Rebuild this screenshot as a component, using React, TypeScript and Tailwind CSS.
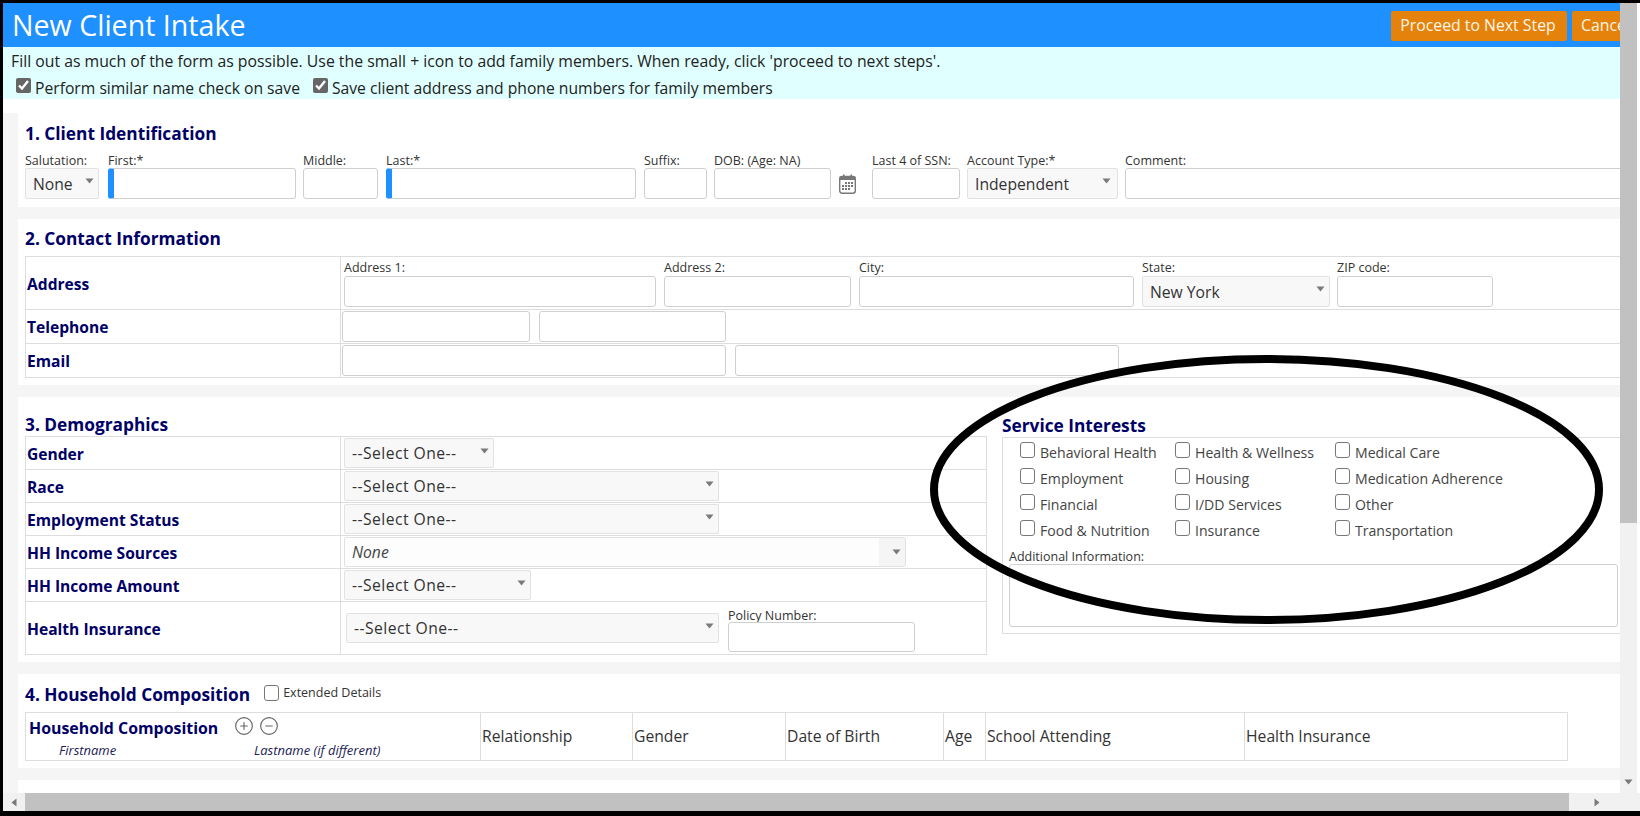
import React from "react";
import { CirclePlus, CircleMinus } from "lucide-react";

const inputCls = "block h-full w-full rounded-[3px] border border-[#cfcfcf] bg-white outline-none";

function Arrow({ className = "" }: { className?: string }) {
  return (
    <svg width="9" height="6" viewBox="0 0 9 6" className={className}>
      <path d="M0.5 0.5 H8.5 L4.5 5.5 Z" fill="#7a7a7a" />
    </svg>
  );
}

function Sel({ text, className = "" }: { text: string; className?: string }) {
  return (
    <div className={"flex items-center justify-between rounded-[2px] border border-[#e2e2e2] bg-[#f8f8f8] pl-[7px] pr-[4px] text-[15.7px] text-[#333] " + className}>
      <span className="whitespace-nowrap pt-[2px]">{text}</span>
      <Arrow className="mb-[5px] shrink-0" />
    </div>
  );
}

function Field({ label, className = "", children }: { label: string; className?: string; children: React.ReactNode }) {
  return (
    <div className={"flex shrink-0 flex-col " + className}>
      <div className="h-[15px] whitespace-nowrap text-[12.5px] leading-[16px] text-[#333]">{label}</div>
      <div className="h-[31px]">{children}</div>
    </div>
  );
}

function AddrField({ label, className = "", children }: { label: string; className?: string; children: React.ReactNode }) {
  return (
    <div className={"flex shrink-0 flex-col " + className}>
      <div className="h-[19px] whitespace-nowrap text-[12.5px] leading-[21px] text-[#333]">{label}</div>
      <div className="h-[31px]">{children}</div>
    </div>
  );
}

function Heading({ children, className = "" }: { children: React.ReactNode; className?: string }) {
  return <div className={"flex items-center whitespace-nowrap text-[17.3px] font-bold text-[#000066] " + className}>{children}</div>;
}

function Box({ className = "" }: { className?: string }) {
  return <input type="checkbox" className={"h-[16px] w-[15px] shrink-0 appearance-none rounded-[3px] border border-[#777] bg-white " + className} />;
}

function Row({ label, className = "", cellClass = "", children }: { label: string; className?: string; cellClass?: string; children?: React.ReactNode }) {
  return (
    <div className={"flex border-b border-[#dddddd] " + className}>
      <div className="flex w-[315px] shrink-0 items-center border-r border-[#dddddd] pl-[1px] pt-[3px] text-[15.6px] font-bold text-[#000066]">{label}</div>
      <div className={"flex min-w-0 flex-1 " + cellClass}>{children}</div>
    </div>
  );
}

const interests = [
  ["Behavioral Health", "Health & Wellness", "Medical Care"],
  ["Employment", "Housing", "Medication Adherence"],
  ["Financial", "I/DD Services", "Other"],
  ["Food & Nutrition", "Insurance", "Transportation"],
];

const hhCols = [
  { t: "Relationship", w: "w-[152px]" },
  { t: "Gender", w: "w-[153px]" },
  { t: "Date of Birth", w: "w-[158px]" },
  { t: "Age", w: "w-[42px]" },
  { t: "School Attending", w: "w-[259px]" },
  { t: "Health Insurance", w: "flex-1" },
];

const selectOne = "tracking-[0.45px]";

export default function App() {
  return (
    <div className="relative flex h-[816px] w-[1640px] flex-col overflow-hidden border-l-[3px] border-t-[3px] border-b-[5px] border-black bg-white font-['Open_Sans',sans-serif] text-[#222]">
      <div className="flex min-h-0 flex-1">
        <main className="flex w-[1617px] shrink-0 flex-col overflow-hidden">
          <header className="flex h-[44px] shrink-0 items-center bg-[#1e90ff] pl-[9px] pt-[1px]">
            <div className="min-w-0 flex-1 whitespace-nowrap text-[28.6px] leading-none text-white">New Client Intake</div>
            <div className="mr-[-64px] flex shrink-0 gap-[5px]">
              <button className="h-[30px] w-[176px] rounded-[2px] bg-[#e5820b] pr-[2px] text-[15.8px] text-[#fff6e8]">Proceed to Next Step</button>
              <button className="h-[30px] w-[112px] rounded-[2px] bg-[#e5820b] pl-[9px] text-left text-[15.8px] text-[#fff6e8]">Cancel</button>
            </div>
          </header>

          <div className="h-[52px] shrink-0 bg-[#e0ffff] pl-[8px]">
            <div className="flex h-[27px] items-end whitespace-nowrap text-[15.8px]">Fill out as much of the form as possible. Use the small + icon to add family members. When ready, click 'proceed to next steps'.</div>
            <div className="flex h-[25px] items-center whitespace-nowrap pl-[5px] text-[15.7px]">
              <input type="checkbox" defaultChecked className="m-0 mb-[2px] h-[15px] w-[15px] accent-[#666]" />
              <span className="ml-[4px] pt-[4px]">Perform similar name check on save</span>
              <input type="checkbox" defaultChecked className="m-0 mb-[2px] ml-[13px] h-[15px] w-[15px] accent-[#666]" />
              <span className="ml-[4px] pt-[4px]">Save client address and phone numbers for family members</span>
            </div>
          </div>

          <div className="mt-[14px] flex min-h-0 flex-1 flex-col gap-[12px] overflow-hidden bg-[#f5f5f5] pl-[15px]">
            {/* 1 */}
            <section className="h-[94px] shrink-0 bg-white pl-[7px]">
              <Heading className="h-[40px] pt-[2px]">1. Client Identification</Heading>
              <div className="flex">
                <Field label="Salutation:" className="w-[74px]"><Sel text="None" className="h-full" /></Field>
                <Field label="First:*" className="ml-[9px] w-[188px]"><input className={inputCls + " border-l-[6px] border-l-[#1e90ff]"} /></Field>
                <Field label="Middle:" className="ml-[7px] w-[75px]"><input className={inputCls} /></Field>
                <Field label="Last:*" className="ml-[8px] w-[250px]"><input className={inputCls + " border-l-[6px] border-l-[#1e90ff]"} /></Field>
                <Field label="Suffix:" className="ml-[8px] w-[63px]"><input className={inputCls} /></Field>
                <Field label="DOB: (Age: NA)" className="ml-[7px] w-[117px]"><input className={inputCls} /></Field>
                <div className="ml-[8px] flex w-[18px] shrink-0 items-end pb-[5px]">
                  <svg width="17" height="20" viewBox="0 0 17 20">
                    <rect x="0.7" y="2.5" width="15.6" height="16.8" rx="2.5" fill="none" stroke="#777" strokeWidth="1.4" />
                    <rect x="0.7" y="2.5" width="15.6" height="3.5" fill="#777" />
                    <rect x="4" y="0.5" width="1.6" height="3.5" fill="#777" />
                    <rect x="11.4" y="0.5" width="1.6" height="3.5" fill="#777" />
                    <g fill="#777">
                      <rect x="6" y="8" width="2" height="2" /><rect x="9" y="8" width="2" height="2" /><rect x="12" y="8" width="2" height="2" />
                      <rect x="3" y="11" width="2" height="2" /><rect x="6" y="11" width="2" height="2" /><rect x="9" y="11" width="2" height="2" /><rect x="12" y="11" width="2" height="2" />
                      <rect x="3" y="14" width="2" height="2" /><rect x="6" y="14" width="2" height="2" /><rect x="9" y="14" width="2" height="2" />
                    </g>
                  </svg>
                </div>
                <Field label="Last 4 of SSN:" className="ml-[15px] w-[88px]"><input className={inputCls} /></Field>
                <Field label="Account Type:*" className="ml-[7px] w-[151px]"><Sel text="Independent" className="h-full pr-[6px]" /></Field>
                <Field label="Comment:" className="ml-[7px] w-[500px]"><input className={inputCls} /></Field>
              </div>
            </section>

            {/* 2 */}
            <section className="h-[166px] shrink-0 bg-white pl-[7px]">
              <Heading className="h-[37px] pt-[3px]">2. Contact Information</Heading>
              <div className="border-t border-l border-[#dddddd]">
                <Row label="Address" className="h-[53px]" cellClass="pl-[3px]">
                  <AddrField label="Address 1:" className="w-[312px]"><input className={inputCls} /></AddrField>
                  <AddrField label="Address 2:" className="ml-[8px] w-[187px]"><input className={inputCls} /></AddrField>
                  <AddrField label="City:" className="ml-[8px] w-[275px]"><input className={inputCls} /></AddrField>
                  <AddrField label="State:" className="ml-[8px] w-[188px]"><Sel text="New York" className="h-full" /></AddrField>
                  <AddrField label="ZIP code:" className="ml-[7px] w-[156px]"><input className={inputCls} /></AddrField>
                </Row>
                <Row label="Telephone" className="h-[34px]" cellClass="items-center pl-[1px]">
                  <input className={inputCls + " !h-[31px] !w-[188px]"} />
                  <input className={inputCls + " ml-[9px] !h-[31px] !w-[187px]"} />
                </Row>
                <Row label="Email" className="h-[34px]" cellClass="items-center pl-[1px]">
                  <input className={inputCls + " !h-[31px] !w-[384px]"} />
                  <input className={inputCls + " ml-[9px] !h-[31px] !w-[384px]"} />
                </Row>
              </div>
            </section>

            {/* 3 */}
            <section className="flex h-[265px] shrink-0 bg-white pl-[7px]">
              <div className="w-[962px] shrink-0">
                <Heading className="h-[39px] pt-[17px]">3. Demographics</Heading>
                <div className="border-t border-l border-r border-[#dddddd]">
                  <Row label="Gender" className="h-[33px]" cellClass="items-center pl-[3px]"><Sel text="--Select One--" className={"h-[30px] w-[150px] " + selectOne} /></Row>
                  <Row label="Race" className="h-[33px]" cellClass="items-center pl-[3px]"><Sel text="--Select One--" className={"h-[30px] w-[375px] " + selectOne} /></Row>
                  <Row label="Employment Status" className="h-[33px]" cellClass="items-center pl-[3px]"><Sel text="--Select One--" className={"h-[30px] w-[375px] " + selectOne} /></Row>
                  <Row label="HH Income Sources" className="h-[33px]" cellClass="items-center pl-[3px]">
                    <div className="flex h-[30px] w-[562px] items-center justify-between rounded-[2px] border border-[#e2e2e2] bg-[#fdfdfd] text-[15.7px] italic text-[#444]">
                      <span className="pl-[7px] pt-[2px]">None</span>
                      <span className="flex h-full w-[26px] items-center justify-center bg-[#f5f5f5] pl-[8px]"><Arrow /></span>
                    </div>
                  </Row>
                  <Row label="HH Income Amount" className="h-[33px]" cellClass="items-center pl-[3px]"><Sel text="--Select One--" className={"h-[30px] w-[187px] " + selectOne} /></Row>
                  <Row label="Health Insurance" className="h-[53px]" cellClass="items-start pl-[5px]">
                    <Sel text="--Select One--" className={"mt-[11px] h-[30px] w-[373px] " + selectOne} />
                    <div className="ml-[9px] flex w-[187px] flex-col pt-[5px]">
                      <div className="h-[15px] whitespace-nowrap text-[12.5px] leading-[17px] text-[#333]">Policy Number:</div>
                      <input className={inputCls + " !h-[30px]"} />
                    </div>
                  </Row>
                </div>
              </div>
              <div className="ml-[15px] min-w-0 flex-1">
                <Heading className="h-[40px] pt-[17px]">Service Interests</Heading>
                <div className="h-[197px] border-t border-b border-l border-[#dddddd] pt-[4px]">
                  <div className="grid grid-cols-[155px_160px_1fr] pl-[17px]">
                    {interests.flat().map((t) => (
                      <label key={t} className="flex h-[26px] items-start gap-[5px] whitespace-nowrap text-[14.1px] leading-[22px] text-[#444]">
                        <Box />
                        <span>{t}</span>
                      </label>
                    ))}
                  </div>
                  <div className="pl-[6px] pr-[2px]">
                    <div className="h-[18px] whitespace-nowrap text-[12.5px] leading-[21px] text-[#333]">Additional Information:</div>
                    <textarea className="block h-[63px] w-full resize-none rounded-[3px] border border-[#cfcfcf] bg-white outline-none" />
                  </div>
                </div>
              </div>
            </section>

            {/* 4 */}
            <section className="h-[94px] shrink-0 bg-white pl-[7px]">
              <div className="flex h-[38px] items-center pt-[4px]">
                <Heading>4. Household Composition</Heading>
                <Box className="ml-[14px] mb-[4px]" />
                <span className="mb-[3px] ml-[4px] whitespace-nowrap text-[12.5px] text-[#333]">Extended Details</span>
              </div>
              <div className="flex h-[49px] w-[1543px] border border-[#dddddd]">
                <div className="w-[455px] shrink-0 border-r border-[#dddddd]">
                  <div className="flex h-[28px] items-center pl-[3px]">
                    <span className="whitespace-nowrap pt-[4px] text-[15.9px] font-bold text-[#000066]">Household Composition</span>
                    <CirclePlus size={20} strokeWidth={1.4} color="#666" className="mb-[2px] ml-[16px]" />
                    <CircleMinus size={20} strokeWidth={1.4} color="#666" className="mb-[2px] ml-[5px]" />
                  </div>
                  <div className="flex h-[19px] items-center text-[13px] italic text-[#222255]">
                    <span className="ml-[33px] w-[195px]">Firstname</span>
                    <span>Lastname (if different)</span>
                  </div>
                </div>
                {hhCols.map((c, i) => (
                  <div key={c.t} className={"flex shrink-0 items-center whitespace-nowrap pl-[1px] pt-[1px] text-[15.7px] text-[#333] " + c.w + (i < 5 ? " border-r border-[#dddddd]" : "")}>{c.t}</div>
                ))}
              </div>
            </section>

            <section className="h-[14px] shrink-0 bg-white" />
          </div>
        </main>

        <aside className="flex w-[20px] shrink-0 flex-col bg-white pr-[3px]">
          <div className="h-[520px] bg-[#c1c1c1]" />
          <div className="flex flex-1 items-end justify-center bg-[#f1f1f1] pb-[8px]"><Arrow /></div>
        </aside>
      </div>

      <div className="flex h-[18px] shrink-0 items-stretch bg-[#f1f1f1] pr-[3px]">
        <div className="flex w-[22px] items-center justify-center">
          <svg width="6" height="9" viewBox="0 0 6 9"><path d="M5.5 0.5 V8.5 L0.5 4.5 Z" fill="#7a7a7a" /></svg>
        </div>
        <div className="w-[1544px] bg-[#c1c1c1]" />
        <div className="flex flex-1 items-center justify-center pr-[12px]">
          <svg width="6" height="9" viewBox="0 0 6 9"><path d="M0.5 0.5 V8.5 L5.5 4.5 Z" fill="#7a7a7a" /></svg>
        </div>
      </div>

      <svg className="pointer-events-none absolute left-[927px] top-[352px]" width="673" height="269" viewBox="0 0 673 269">
        <ellipse cx="336.5" cy="134.5" rx="332.5" ry="130.5" fill="none" stroke="#000" strokeWidth="8" />
      </svg>
    </div>
  );
}
